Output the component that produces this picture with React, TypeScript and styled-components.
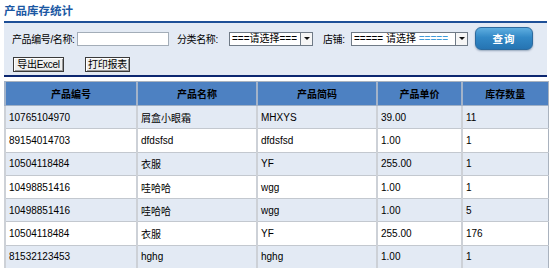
import React from "react";
import styled, { createGlobalStyle } from "styled-components";

const GlobalStyle = createGlobalStyle`
  body {
    margin: 0;
    background: #fff;
    font-family: "Liberation Sans", "Noto Sans CJK SC", sans-serif;
    font-size: 10px;
    color: #000;
  }
`;

const Page = styled.div`
  width: 543px;
  padding-left: 4px;
`;

const Title = styled.h1`
  margin: 0;
  height: 21px;
  line-height: 22px;
  font-size: 11.5px;
  font-weight: bold;
  color: #1b58a3;
  border-bottom: 2px solid #1d4f97;
`;

const Panel = styled.div`
  background: #e3eaf4;
  border-bottom: 2px solid #0c2770;
  padding: 3px 0 3px 8px;
  display: flex;
  flex-direction: column;
  gap: 6px;
`;

const FilterRow = styled.div<{ $h: number }>`
  display: flex;
  align-items: center;
  height: ${(p) => p.$h}px;
`;

const Label = styled.span<{ $w: number; $ml?: number }>`
  flex: none;
  width: ${(p) => p.$w}px;
  margin-left: ${(p) => p.$ml ?? 0}px;
  white-space: nowrap;
  letter-spacing: -0.4px;
`;

const TextBox = styled.div`
  flex: none;
  width: 90px;
  height: 12px;
  border: 1px solid #a3adb8;
  background: #fff;
`;

const Select = styled.div<{ $w: number }>`
  flex: none;
  width: ${(p) => p.$w}px;
  height: 14px;
  box-sizing: border-box;
  border: 1px solid #6f7a86;
  background: #fff;
  display: flex;
  align-items: center;
  justify-content: space-between;
  padding-left: 2px;
  line-height: 12px;
`;

const SelectText = styled.span`
  white-space: pre;
  overflow: hidden;
`;

const Faint = styled.span`
  color: #3f9ad8;
`;

const Arrow = styled.span`
  flex: none;
  width: 12px;
  height: 12px;
  border-left: 1px solid #6f7a86;
  box-sizing: border-box;
  background: #f6f6f6;
  display: flex;
  align-items: center;
  justify-content: center;
  &::after {
    content: "";
    border-left: 3px solid transparent;
    border-right: 3px solid transparent;
    border-top: 3px solid #111;
  }
`;

const QueryButton = styled.button`
  flex: none;
  margin-left: 7px;
  width: 58px;
  height: 23px;
  padding: 0;
  border: 1px solid #2c6a9e;
  border-radius: 6px;
  background: linear-gradient(#5eaee0, #3288c6 45%, #2674b2);
  color: #fff;
  font-family: inherit;
  font-size: 10.5px;
  font-weight: bold;
  letter-spacing: 1px;
  box-shadow: 0 1px 2px rgba(0, 40, 80, 0.35);
`;

const ActionButton = styled.button<{ $w: number; $ml?: number }>`
  flex: none;
  margin-left: ${(p) => p.$ml ?? 0}px;
  width: ${(p) => p.$w}px;
  height: 15px;
  padding: 0;
  border: 1px solid #3a3a3a;
  box-shadow: inset 1px 1px 0 #fff, inset -1px -1px 0 #9a9a9a;
  background: #efefee;
  font-family: inherit;
  font-size: 10px;
  line-height: 12px;
  letter-spacing: -0.3px;
  color: #000;
  white-space: nowrap;
`;

const Table = styled.table`
  margin-top: 4px;
  width: 543px;
  border-collapse: collapse;
  table-layout: fixed;
  border: 1px solid #a9b2be;
`;

const Th = styled.th`
  height: 23px;
  padding: 0;
  background: #4d81c2;
  border-left: 2px solid #a3b3c9;
  border-bottom: 1px solid #9fb0c6;
  font-size: 10px;
  font-weight: bold;
  color: #000;
  text-align: center;
`;

const Tr = styled.tr<{ $alt: boolean }>`
  height: 23.3px;
  background: ${(p) => (p.$alt ? "#e3eaf4" : "#fff")};
`;

const Td = styled.td`
  padding: 0 0 0 3px;
  border-bottom: 1px solid #c3c8cf;
  border-left: 2px solid #cdd1d7;
  white-space: nowrap;
  overflow: hidden;
`;

const columns = [
  { title: "产品编号", w: 132 },
  { title: "产品名称", w: 120 },
  { title: "产品简码", w: 120 },
  { title: "产品单价", w: 85 },
  { title: "库存数量", w: 86 },
];

const rows = [
  ["10765104970", "屑盒小眼霜", "MHXYS", "39.00", "11"],
  ["89154014703", "dfdsfsd", "dfdsfsd", "1.00", "1"],
  ["10504118484", "衣服", "YF", "255.00", "1"],
  ["10498851416", "哇哈哈", "wgg", "1.00", "1"],
  ["10498851416", "哇哈哈", "wgg", "1.00", "5"],
  ["10504118484", "衣服", "YF", "255.00", "176"],
  ["81532123453", "hghg", "hghg", "1.00", "1"],
];

export default function App() {
  return (
    <Page>
      <GlobalStyle />
      <Title>产品库存统计</Title>
      <Panel>
        <FilterRow $h={25}>
          <Label $w={65}>产品编号/名称:</Label>
          <TextBox />
          <Label $w={52} $ml={8}>
            分类名称:
          </Label>
          <Select $w={84}>
            <SelectText>===请选择===</SelectText>
            <Arrow />
          </Select>
          <Label $w={28} $ml={10}>
            店铺:
          </Label>
          <Select $w={117}>
            <SelectText>
              ===== 请选择 <Faint>=====</Faint>
            </SelectText>
            <Arrow />
          </Select>
          <QueryButton>查询</QueryButton>
        </FilterRow>
        <FilterRow $h={15}>
          <ActionButton $w={51} $ml={1}>
            导出Excel
          </ActionButton>
          <ActionButton $w={45} $ml={21}>
            打印报表
          </ActionButton>
        </FilterRow>
      </Panel>
      <Table>
        <colgroup>
          {columns.map((c) => (
            <col key={c.title} style={{ width: c.w }} />
          ))}
        </colgroup>
        <thead>
          <tr>
            {columns.map((c) => (
              <Th key={c.title}>{c.title}</Th>
            ))}
          </tr>
        </thead>
        <tbody>
          {rows.map((r, i) => (
            <Tr key={i} $alt={i % 2 === 0}>
              {r.map((v, j) => (
                <Td key={j}>{v}</Td>
              ))}
            </Tr>
          ))}
        </tbody>
      </Table>
    </Page>
  );
}
